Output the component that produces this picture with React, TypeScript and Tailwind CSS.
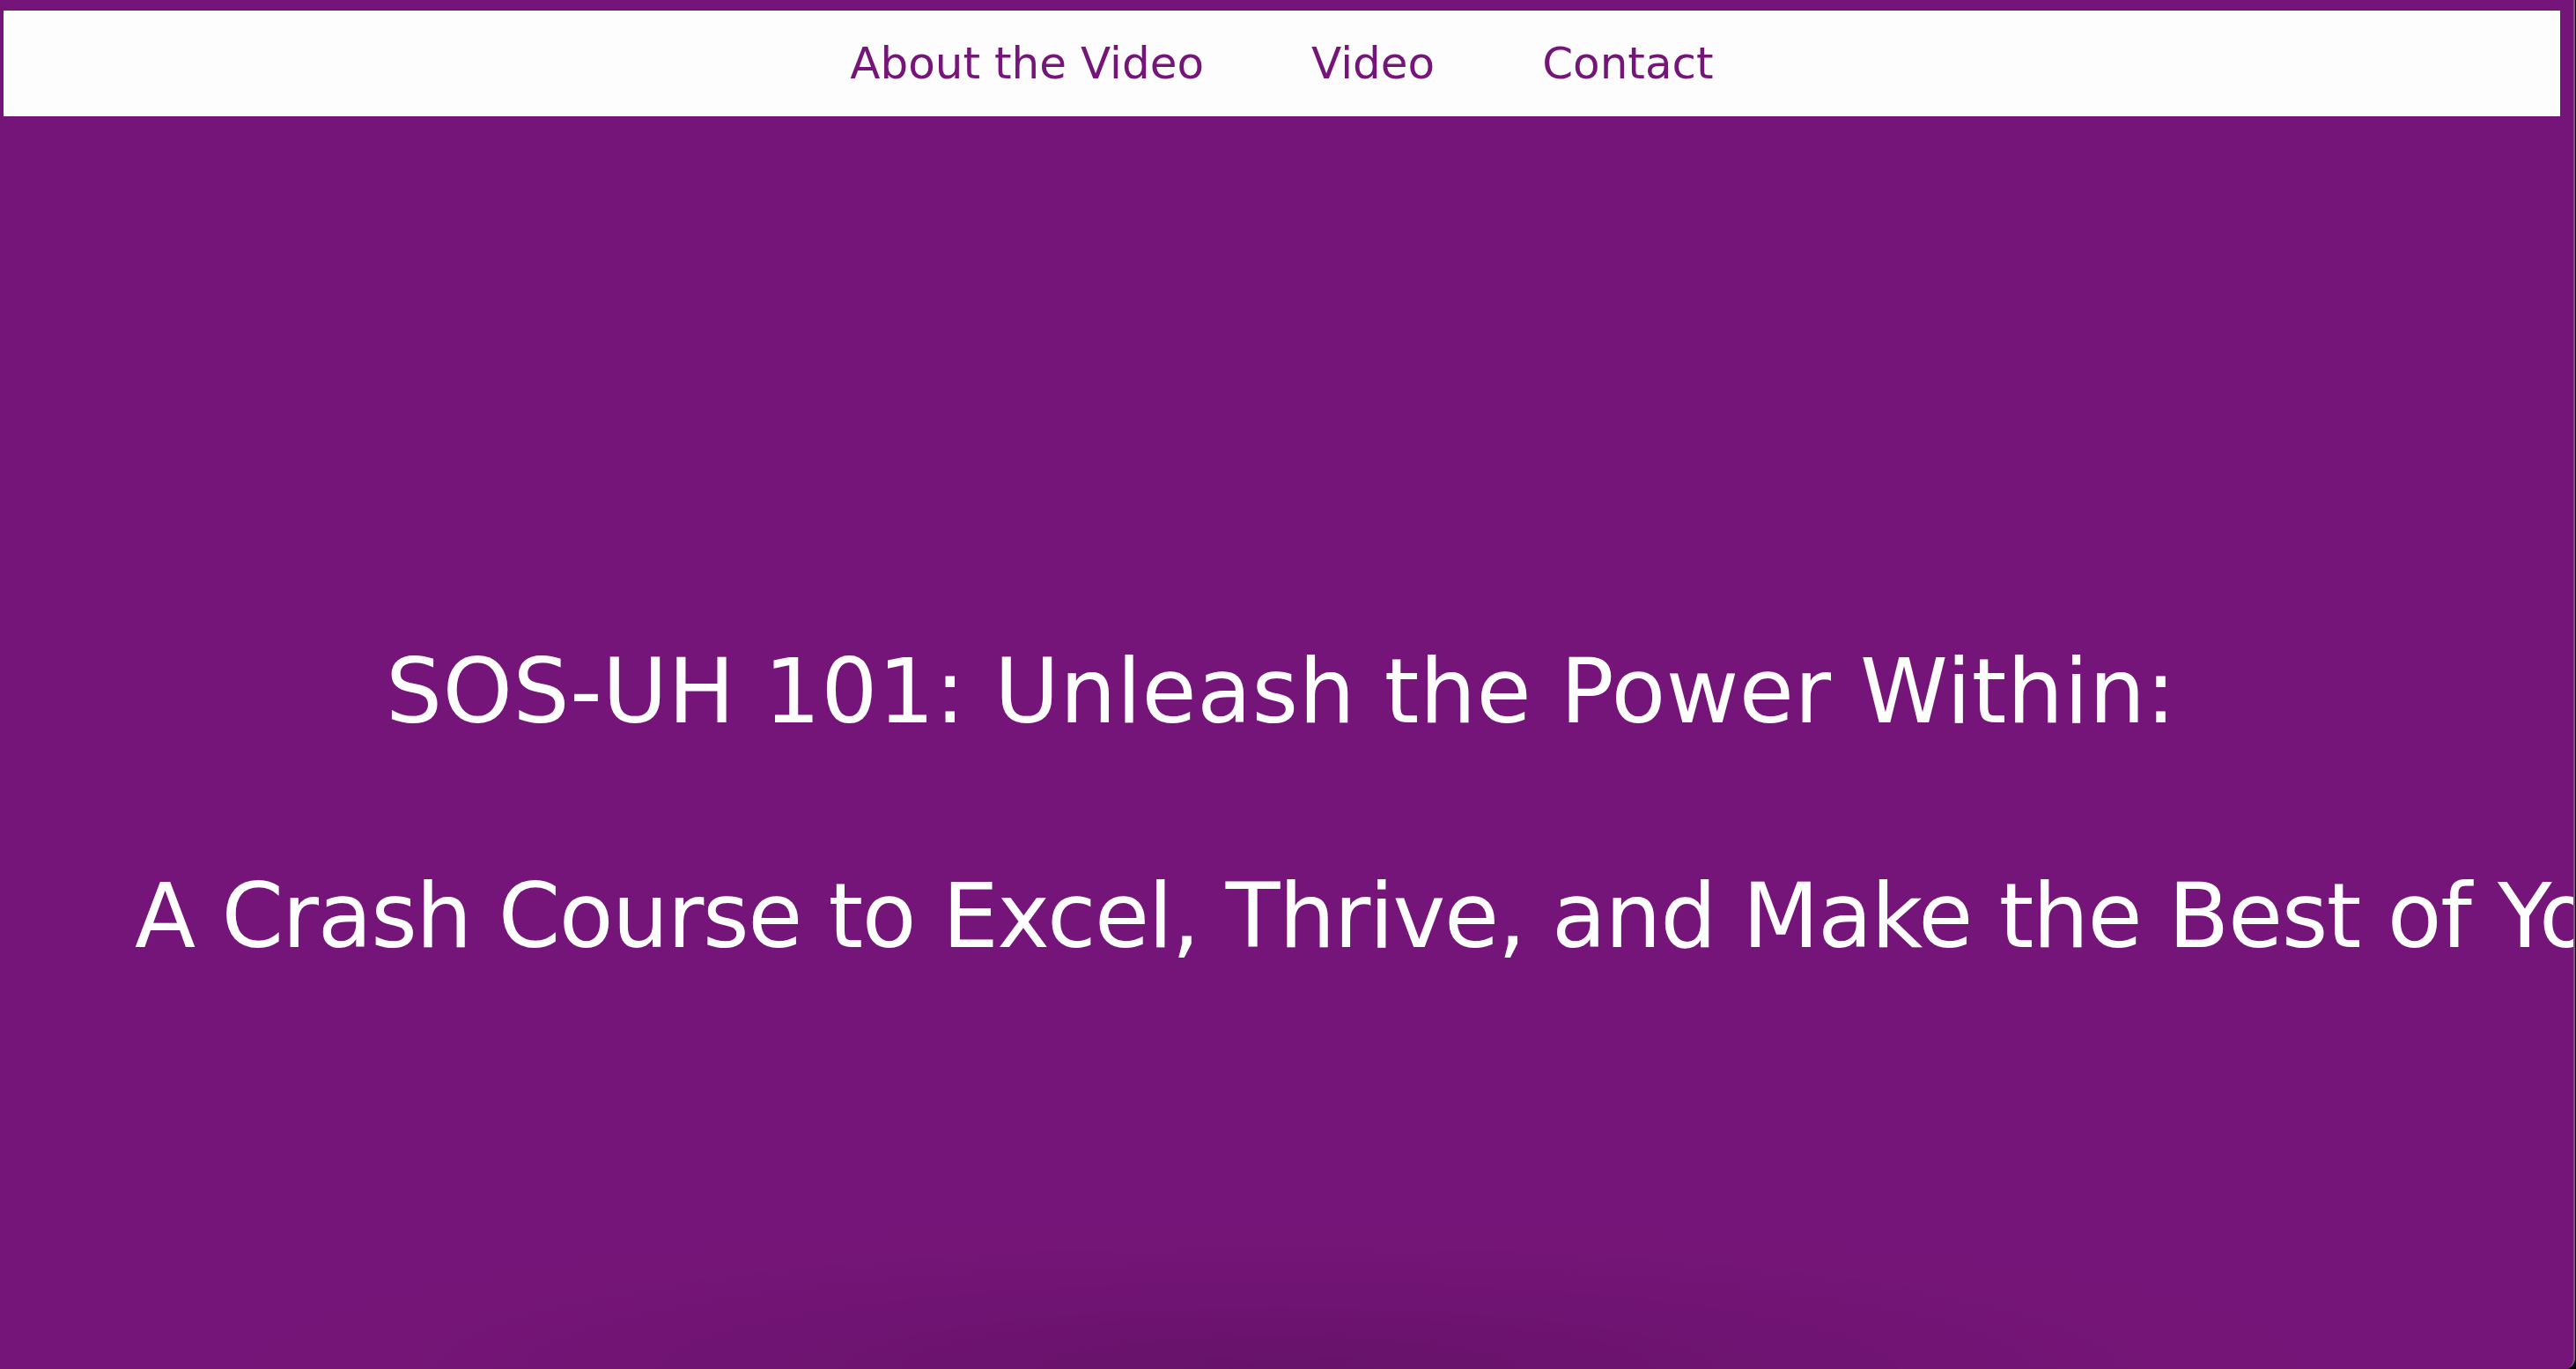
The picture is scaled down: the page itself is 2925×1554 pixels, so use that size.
export default function App() {
  const links = ["About the Video", "Video", "Contact"];

  return (
    <div className="h-screen w-full overflow-hidden bg-black font-['DejaVu_Sans',sans-serif]">
      <main className="relative h-full w-[2924px] overflow-hidden rounded-br-[12px] border-r-2 border-[#8d4a90] bg-[#761579]">
        {/* Top navigation */}
        <nav className="relative z-10 ml-[4px] mr-[15px] mt-[12px] flex h-[120px] items-center justify-center gap-[122px] bg-[#fdfdfd]">
          {links.map((link) => (
            <a
              key={link}
              href="#"
              className="text-[50px] leading-none text-[#761579] no-underline"
            >
              {link}
            </a>
          ))}
        </nav>

        {/* Hero title */}
        <h1 className="relative z-10 mt-[589px] flex flex-col gap-[127px] pl-[153px] pr-[166px] text-center text-[101px] font-normal text-white">
          <span className="block leading-[128px] tracking-[0.5px]">SOS-UH 101: Unleash the Power Within:</span>
          <span className="block whitespace-nowrap text-left leading-[128px] tracking-[-1.4px]">
            A Crash Course to Excel, Thrive, and Make the Best of Your Time at NYU Abu Dhabi
          </span>
        </h1>

        {/* soft shadow at the bottom edge */}
        <div className="pointer-events-none absolute bottom-0 left-[250px] h-[170px] w-[2400px] bg-[radial-gradient(ellipse_50%_100%_at_50%_100%,rgba(0,0,0,0.13),rgba(0,0,0,0.05)_55%,transparent_100%)]"></div>
      </main>
    </div>
  );
}
